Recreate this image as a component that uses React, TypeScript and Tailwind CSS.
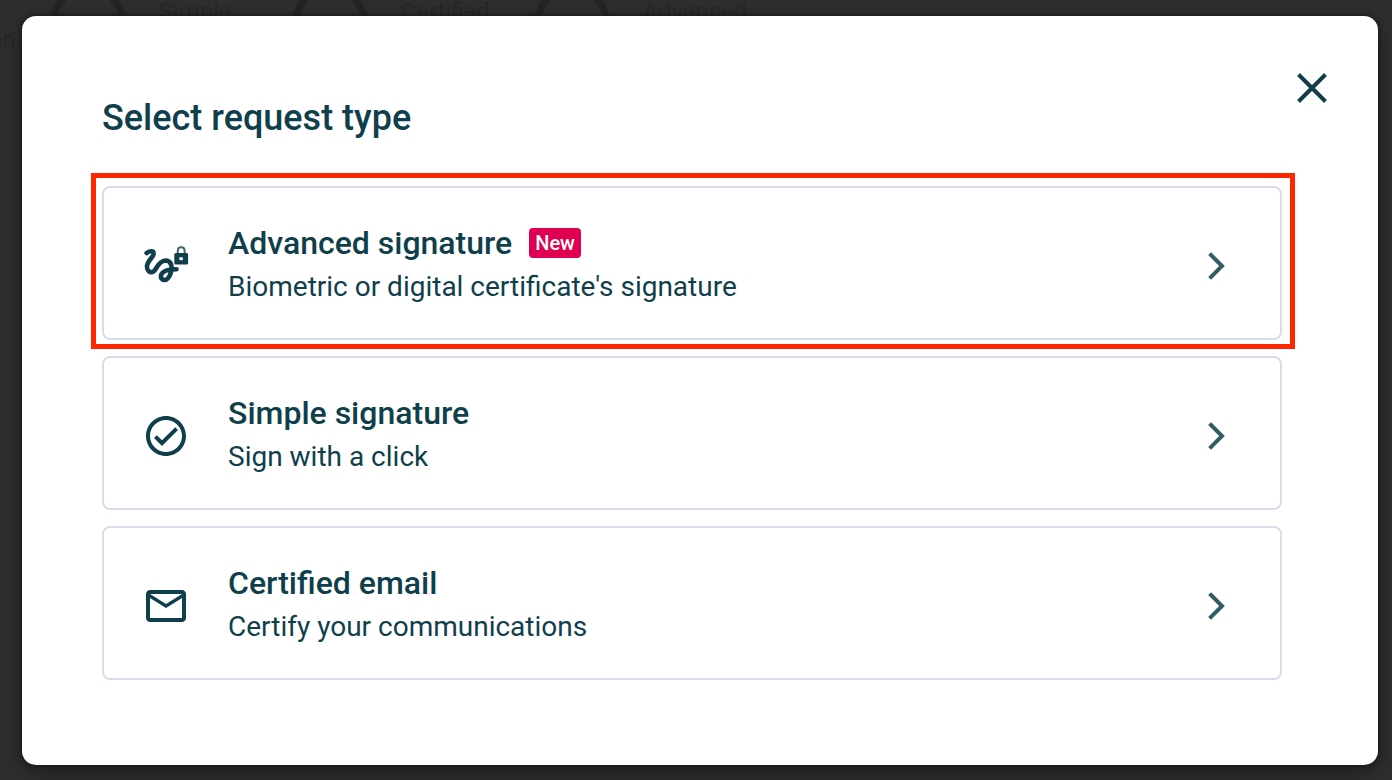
import type { ReactNode } from 'react'

type RequestType = {
  title: string
  description: string
  icon: ReactNode
  isNew?: boolean
  highlighted?: boolean
}

function SignatureLockIcon() {
  return (
    <svg className="w-12 h-12" viewBox="0 0 48 48" fill="none" aria-hidden="true">
      <path
        d="M4.700 11C7 9 11.500 8 11.700 11.500C12 14.500 5.500 18.500 5 24C4.700 28.500 8 31.500 11.500 29.500C15 27 16 19 23.500 18.500C29 18.500 30.500 24 29 30C28 35 25 38.500 22 38C18 37 18 32.500 21.500 30C25 27.500 29 27.200 34.500 27.200"
        stroke="currentColor"
        strokeWidth="4.600"
        strokeLinecap="round"
      />
      <path
        d="M35.800 12V8.500C35.800 4 42.600 4 42.600 8.500V12"
        stroke="currentColor"
        strokeOpacity="0.8"
        strokeWidth="2"
      />
      <rect x="32.300" y="11" width="13.800" height="11.500" rx="1.500" fill="currentColor" />
      <rect x="37.400" y="15.300" width="3.400" height="2.800" fill="white" />
    </svg>
  )
}

function CheckCircleIcon() {
  return (
    <svg className="w-12 h-12" viewBox="0 0 24 24" fill="currentColor" aria-hidden="true">
      <path d="M12 2C6.480 2 2 6.480 2 12s4.480 10 10 10 10-4.480 10-10S17.520 2 12 2zm0 18c-4.410 0-8-3.590-8-8s3.590-8 8-8 8 3.590 8 8-3.590 8-8 8zm4.590-12.420L10 14.170l-2.590-2.580L6 13l4 4 8-8z" />
    </svg>
  )
}

function MailIcon() {
  return (
    <svg className="w-12 h-12" viewBox="0 0 24 24" fill="currentColor" aria-hidden="true">
      <path d="M22 6c0-1.100-.9-2-2-2H4c-1.100 0-2 .9-2 2v12c0 1.100.9 2 2 2h16c1.100 0 2-.9 2-2V6zm-2 0l-8 5-8-5h16zm0 12H4V8l8 5 8-5v10z" />
    </svg>
  )
}

const requestTypes: RequestType[] = [
  {
    title: 'Advanced signature',
    description: "Biometric or digital certificate's signature",
    icon: <SignatureLockIcon />,
    isNew: true,
    highlighted: true,
  },
  {
    title: 'Simple signature',
    description: 'Sign with a click',
    icon: <CheckCircleIcon />,
  },
  {
    title: 'Certified email',
    description: 'Certify your communications',
    icon: <MailIcon />,
  },
]

const filters = ['Simple', 'Certified', 'Advanced']

function RequestCard({ title, description, icon, isNew, highlighted }: RequestType) {
  return (
    <li className="relative">
      <button
        type="button"
        className="flex w-full items-center gap-[38px] rounded-lg border-2 border-[#d9dce9] bg-white pt-[34px] pr-[39px] pb-7 pl-[38px] text-left"
      >
        {icon}
        <span className="flex-1">
          <span className="flex items-center gap-[17px]">
            <span className="text-[32px] leading-[42px] font-medium">{title}</span>
            {isNew && (
              <span className="rounded bg-[#e00052] px-1.5 text-[20px] leading-[30px] font-medium text-white">
                New
              </span>
            )}
          </span>
          <span className="block text-[28px] leading-[46px]">{description}</span>
        </span>
        <svg className="w-12 h-12 opacity-85" viewBox="0 0 48 48" fill="none" aria-hidden="true">
          <path d="M18 13L29 24L18 35" stroke="currentColor" strokeWidth="4" strokeLinecap="square" />
        </svg>
      </button>
      {highlighted && (
        <div className="pointer-events-none absolute -top-[13px] -right-[13px] -bottom-[9px] -left-[11px] border-5 border-[#ff2600]" />
      )}
    </li>
  )
}

export default function App() {
  return (
    <div className="relative flex min-h-screen overflow-hidden bg-[#2e2e2e] pt-4 pr-[14px] pb-[15px] pl-[22px] font-[Roboto,sans-serif]">
      {/* Dimmed page behind the dialog */}
      <div className="absolute inset-0 text-2xl font-light text-[#252627]" aria-hidden="true">
        <div className="-mt-[15px] flex pl-[50px]">
          {filters.map((label) => (
            <div key={label} className="flex w-[242px] shrink-0 gap-[33px]">
              <span className="size-[76px] shrink-0 rounded-full border-7 border-[#222527]" />
              <span className="pt-[7px] leading-10">{label}</span>
            </div>
          ))}
        </div>
        <div className="-mt-[41px] -ml-4 leading-10">ion</div>
      </div>

      <section
        role="dialog"
        aria-modal="true"
        aria-labelledby="dialog-title"
        className="relative flex-1 rounded-[14px] bg-white pt-[52px] pr-12 pb-[85px] pl-20 text-[#103f4c] shadow-[0_0_4px_#111111,0_8px_24px_rgba(0,0,0,0.35)]"
      >
        <header className="flex items-start justify-between">
          <h1 id="dialog-title" className="pt-6 text-[36px] leading-[52px] font-medium">
            Select request type
          </h1>
          <button type="button" aria-label="Close" className="-mr-0.5">
            <svg className="size-10" viewBox="0 0 40 40" fill="none" aria-hidden="true">
              <path d="M6.500 6.500L33.500 33.500M33.500 6.500L6.500 33.500" stroke="currentColor" strokeWidth="4" />
            </svg>
          </button>
        </header>

        <ul className="mt-[42px] mr-12 flex flex-col gap-4">
          {requestTypes.map((type) => (
            <RequestCard key={type.title} {...type} />
          ))}
        </ul>
      </section>
    </div>
  )
}
